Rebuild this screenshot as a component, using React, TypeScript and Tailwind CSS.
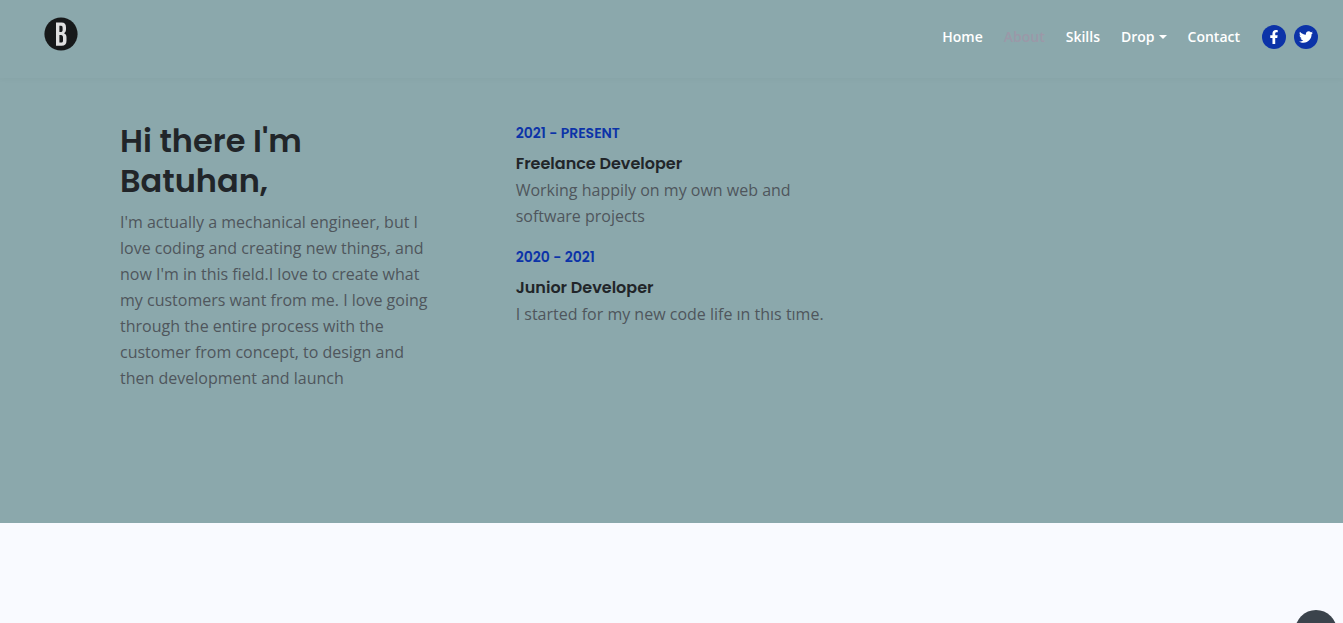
import React from "react";
import { FaFacebookF, FaTwitter } from "react-icons/fa";

const jobs = [
  {
    period: "2021 - PRESENT",
    title: "Freelance Developer",
    text: "Working happily on my own web and software projects",
  },
  {
    period: "2020 - 2021",
    title: "Junior Developer",
    text: "I started for my new code life ın thıs tıme.",
  },
];

function Logo() {
  return (
    <svg viewBox="0 0 34 34" className="size-[34px]" aria-hidden="true">
      <circle cx="17" cy="17" r="16.6" fill="#17191a" />
      <path
        fill="#e0e0e0"
        fillRule="evenodd"
        d="M12 5.6H17.5C20.7 5.6 22 7.4 22 10.5V12.2C22 14.2 21.4 15.5 20 16.2C21.8 16.9 22.5 18.4 22.5 20.5V23.7C22.5 26.9 20.9 28.7 17.6 28.7H12ZM15.4 8.7V15H16.7C17.9 15 18.6 14.2 18.6 12.9V10.9C18.6 9.4 18.1 8.7 17.1 8.7ZM15.4 17.9V25.5H17.3C18.5 25.5 19 24.9 19 23.4V20.5C19 18.7 18.4 17.9 17 17.9Z"
      />
    </svg>
  );
}

function Navbar() {
  return (
    <header className="flex h-[78px] items-start justify-between pl-11 pr-[25px] shadow-[0_2px_5px_rgba(0,0,0,0.025)]">
      <a href="#home" aria-label="Batuhan home" className="mt-[17px]">
        <Logo />
      </a>
      <nav
        aria-label="Main"
        className="mt-[25px] flex h-6 items-center text-sm font-semibold text-white"
      >
        <div className="flex items-center gap-[21px]">
          <a href="#home">Home</a>
          <a href="#about" className="text-[#9b98a8]">About</a>
          <a href="#skills">Skills</a>
          <button type="button" className="flex items-center gap-1">
            Drop
            <svg viewBox="0 0 8 4" className="h-1 w-2" aria-hidden="true">
              <path d="M0 0H8L4 4Z" fill="currentColor" />
            </svg>
          </button>
          <a href="#contact">Contact</a>
        </div>
        <div className="ml-[22px] flex gap-2">
          <a
            href="#facebook"
            aria-label="Facebook"
            className="flex size-6 items-center justify-center rounded-full bg-[#0c33a8]"
          >
            <FaFacebookF size={14} />
          </a>
          <a
            href="#twitter"
            aria-label="Twitter"
            className="flex size-6 items-center justify-center rounded-full bg-[#0c33a8]"
          >
            <FaTwitter size={14} />
          </a>
        </div>
      </nav>
    </header>
  );
}

export default function App() {
  return (
    <div className="min-h-screen bg-[#f9faff] font-['Open_Sans',sans-serif] text-base leading-[26px] text-[#4f565c]">
      <div className="bg-[#8ba8ac]">
        <Navbar />
        <main
          id="about"
          className="mx-auto grid max-w-[1187px] grid-cols-3 pb-[132px] pt-[42px]"
        >
          <section className="px-[42px] pt-px">
            <h1 className="mb-2 font-['Poppins',sans-serif] text-[32px] font-semibold leading-10 text-[#212529]">
              Hi there I'm Batuhan,
            </h1>
            <p>
              I'm actually a mechanical engineer, but I love coding and creating
              new things, and now I'm in this field.I love to create what my
              customers want from me. I love going through the entire process
              with the customer from concept, to design and then development and
              launch
            </p>
          </section>
          <section className="flex flex-col gap-[15px] px-[42px]">
            {jobs.map((job) => (
              <article key={job.period}>
                <h2 className="mb-[5px] font-['Poppins',sans-serif] text-sm font-semibold leading-[26px] text-[#0c33a8]">
                  {job.period}
                </h2>
                <h3 className="font-['Poppins',sans-serif] text-base font-semibold leading-[26px] text-[#212529]">
                  {job.title}
                </h3>
                <p>{job.text}</p>
              </article>
            ))}
          </section>
        </main>
      </div>
      <button
        type="button"
        aria-label="Back to top"
        className="fixed -bottom-[29px] right-[6px] size-[42px] rounded-full bg-[#3b434c]"
      />
    </div>
  );
}
